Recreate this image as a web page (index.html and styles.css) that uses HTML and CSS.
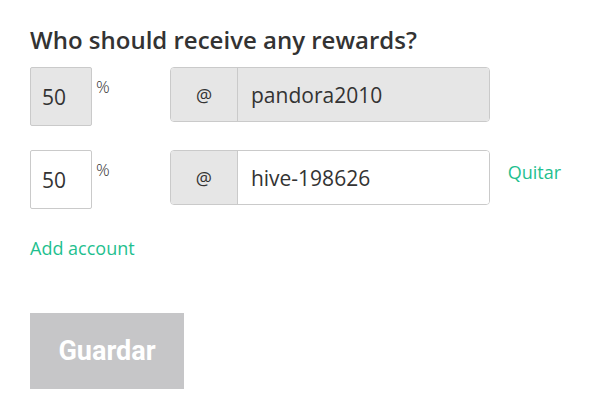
FILE: index.html
```html
<!DOCTYPE html>
<html>
<head>
    <meta charset="UTF-8">
    <title>Beneficiaries</title>
    <link rel="stylesheet" href="styles.css">
</head>
<body>
    <h3 class="title">Who should receive any rewards?</h3>

    <div class="row">
        <div class="pct">
            <input class="pct-input" type="text" value="50" disabled>
            <span class="pct-sign">%</span>
        </div>
        <div class="account">
            <span class="addon">@</span>
            <input class="account-input" type="text" value="pandora2010" disabled>
        </div>
    </div>

    <div class="row">
        <div class="pct">
            <input class="pct-input" type="text" value="50">
            <span class="pct-sign">%</span>
        </div>
        <div class="account">
            <span class="addon">@</span>
            <input class="account-input" type="text" value="hive-198626">
        </div>
        <a class="link remove" href="#">Quitar</a>
    </div>

    <a class="link add" href="#">Add account</a>

    <div class="actions">
        <button class="save" disabled>Guardar</button>
    </div>
</body>
</html>
```

FILE: styles.css
```css
body {
    margin: 0;
    padding: 25px 30px;
    font-family: "Open Sans", sans-serif;
    color: #333;
    background: #fff;
}
.title {
    margin: 0 0 12px;
    font-size: 24px;
    font-weight: 600;
    line-height: 30px;
}
.row {
    display: flex;
    align-items: flex-start;
    margin-bottom: 24px;
}
.pct {
    display: flex;
    align-items: flex-start;
    width: 140px;
}
.pct-input {
    width: 62px;
    height: 59px;
    box-sizing: border-box;
    padding: 0 11px;
    border: 1px solid #cacaca;
    border-radius: 2px;
    background: #fff;
    font-family: inherit;
    font-size: 21px;
    color: #333;
}
.pct-input:disabled {
    background: #e6e6e6;
}
.pct-sign {
    margin: 8px 0 0 4px;
    font-size: 17px;
    font-weight: 300;
}
.account {
    display: flex;
    width: 320px;
    height: 55px;
    box-sizing: border-box;
    border: 1px solid #cacaca;
    border-radius: 4px;
    overflow: hidden;
}
.addon {
    width: 66px;
    display: flex;
    align-items: center;
    justify-content: center;
    background: #e6e6e6;
    border-right: 1px solid #cacaca;
    font-size: 18px;
}
.account-input {
    flex: 1;
    min-width: 0;
    border: 0;
    padding: 0 13px;
    background: #fff;
    font-family: inherit;
    font-size: 21px;
    color: #333;
}
.account-input:disabled {
    background: #e6e6e6;
}
.link {
    color: #1fbf8f;
    text-decoration: none;
    font-size: 18px;
}
.remove {
    margin: 10px 0 0 18px;
}
.add {
    display: inline-block;
    margin-top: 3px;
}
.actions {
    margin-top: 53px;
}
.save {
    width: 154px;
    height: 76px;
    border: 0;
    background: #c6c6c8;
    color: #fff;
    font-family: Roboto, sans-serif;
    font-weight: 700;
    font-size: 27px;
}
```
